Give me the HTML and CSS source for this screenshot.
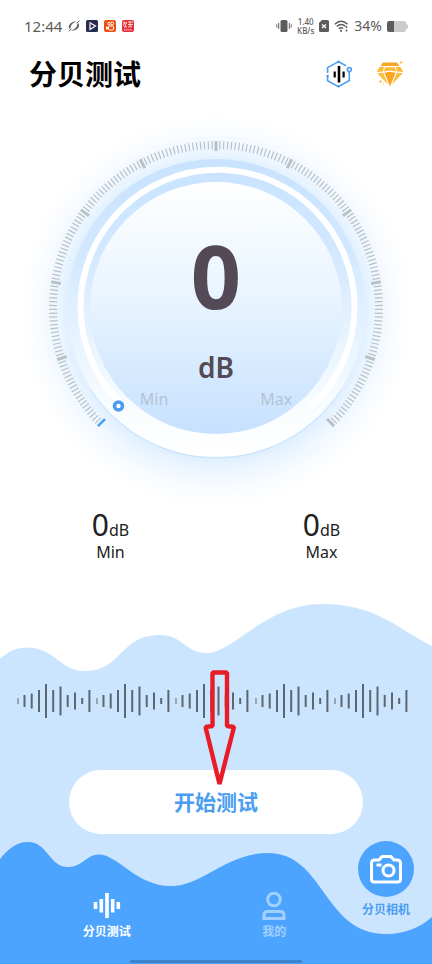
FILE: index.html
```html
<!DOCTYPE html>
<html lang="zh-CN">
<head>
<meta charset="utf-8">
<meta name="viewport" content="width=device-width, initial-scale=1">
<title>分贝测试</title>
<link rel="stylesheet" href="styles.css">
</head>
<body>
<div class="app">
  <div class="status">
    <div class="status-group">
      <span class="clock">12:44</span>
      <svg class="mini" viewBox="0 0 12 12" aria-hidden="true">
        <path d="M1.200 8.600C-.2 4.500 4 .6 9 1.600C5.600 2 2.800 4.600 2.400 8.400Z" fill="#5c5c5c"/>
        <path d="M10.800 3.400C12.200 7.500 8 11.400 3 10.400C6.400 10 9.200 7.400 9.600 3.600Z" fill="#5c5c5c"/>
        <path d="M.6 11.200L3.400 8.800M8.600 3.200L11.400 .8" stroke="#5c5c5c"/>
      </svg>
      <svg class="mini" viewBox="0 0 12 12" aria-hidden="true">
        <rect width="12" height="12" rx="1.500" fill="#262b52"/>
        <path d="M4 2.800V9.500L9.500 6Z" fill="none" stroke="#fff" stroke-width="1.200"/>
        <path d="M3 3L6 5" stroke="#e26a9a"/>
      </svg>
      <svg class="mini" viewBox="0 0 12 12" aria-hidden="true">
        <rect width="12" height="12" rx="2" fill="#f0500f"/>
        <g fill="none" stroke="#fff"><circle cx="5" cy="3.600" r="1.300"/><circle cx="8.200" cy="3.400" r="1.500"/><rect x="4.500" y="6" width="5" height="4" rx="1"/><path d="M4.500 8L2.500 6.800V9.300Z"/></g>
      </svg>
      <svg class="mini" viewBox="0 0 12 12" aria-hidden="true">
        <rect width="12" height="12" rx="2" fill="#e2303c"/>
        <path d="M1 3H5M2.500 1.500L1.500 6M4.500 2L3 7M6 2H11M8 1V6M6 4.500H11M6 7L10 6.500M2 7H5" stroke="#ffe3c8" stroke-width=".9"/>
        <path d="M2 9.800H10" stroke="#ffb6b6" stroke-width="1.200" stroke-dasharray="1.500 .6"/>
      </svg>
    </div>
    <div class="status-group status-right">
      <svg class="vibrate" viewBox="0 0 16 14" aria-hidden="true">
        <rect x="4.500" y="1" width="7" height="12" rx="1.500" fill="#5c5c5c"/>
        <path d="M2.700 4V10M13.300 4V10M.8 5.500V8.500M15.200 5.500V8.500" stroke="#5c5c5c"/>
      </svg>
      <span class="speed"><span>1.40</span><span>KB/s</span></span>
      <svg class="sim" viewBox="0 0 10 12" aria-hidden="true">
        <path d="M3 0H8.500Q10 0 10 1.500V10.500Q10 12 8.500 12H1.500Q0 12 0 10.500V3Z" fill="#5c5c5c"/>
        <path d="M3 4.500L7 8M7 4.500L3 8" stroke="#fff" stroke-width="1.200"/>
      </svg>
      <svg class="wifi" viewBox="0 0 15 12" aria-hidden="true">
        <path d="M.8 4.200Q7 -1.800 13.600 4.200M2.800 6.500Q7 2.600 11.300 6.200M4.800 8.700Q7 6.800 9.200 8.500" fill="none" stroke="#5c5c5c" stroke-width="1.500"/>
        <circle cx="7" cy="10.800" r="1.100" fill="#5c5c5c"/>
        <path d="M12.500 6V8M12.500 9.500V11.500" stroke="#5c5c5c" stroke-width="1.500"/>
      </svg>
      <span class="percent">34%</span>
      <svg class="battery" viewBox="0 0 21 11" aria-hidden="true">
        <path d="M2.500 0H17Q19 0 19.300 3L21 4V7L19.300 8Q19 11 17 11H2.500Q0 11 0 8.500V2.500Q0 0 2.500 0Z" fill="#cbcbcb"/>
        <path d="M2.500 0H7V11H2.500Q0 11 0 8.500V2.500Q0 0 2.500 0Z" fill="#5c5c5c"/>
      </svg>
    </div>
  </div>

  <header class="header">
    <h1>分贝测试</h1>
    <div class="actions">
      <button type="button" aria-label="声波">
        <svg viewBox="0 0 28 28" aria-hidden="true">
          <g fill="none" stroke="#4a9df2" stroke-width="1.600">
            <path d="M2.600 13V7.600L13.500 1.600L21 5.800"/>
            <path d="M2.600 16.500V20.800L13.500 26.600L24.300 20.500V12"/>
            <circle cx="24.300" cy="9.600" r="2"/>
          </g>
          <circle cx="2.600" cy="16" r="1.300" fill="#4a9df2"/>
          <circle cx="13.500" cy="1.800" r="1.300" fill="#4a9df2"/>
          <circle cx="13.500" cy="26.300" r="1.300" fill="#4a9df2"/>
          <path d="M14 6V22.500" stroke="#000" stroke-width="2.600"/>
          <path d="M9.700 11.500V17.500M18.600 11.500V17.500" stroke="#000" stroke-width="2.200"/>
        </svg>
      </button>
      <button type="button" aria-label="会员">
        <svg viewBox="0 0 28 28" aria-hidden="true">
          <path d="M7 2.500H21L23.500 6H4.500Z" fill="#f6a623"/>
          <path d="M3.800 6.800L8 7L7 11.500L.8 12Z" fill="#fbb934"/>
          <path d="M24.200 6.800L20 7L21 11.500L27.200 12Z" fill="#fbb934"/>
          <path d="M9 7.200H19L20 11.500L14 10.500L8 11.500Z" fill="#fbb934"/>
          <path d="M1.200 13.200L7.200 12.800L12 24.500Z" fill="#fcbc3c"/>
          <path d="M26.800 13.200L20.800 12.800L16 24.500Z" fill="#fcbc3c"/>
          <path d="M8.400 12.700L14 11.700L19.600 12.700L14 26.500Z" fill="#f9a51e"/>
          <path d="M25 1V4M23.500 2.500H26.500M4.500 20V23M3 21.500H6M6.500 24H8" stroke="#fbc456"/>
        </svg>
      </button>
    </div>
  </header>

  <main class="main">
    <section class="dial" aria-label="分贝表">
      <svg class="dial-art" viewBox="0 0 432 400" aria-hidden="true">
        <defs>
          <radialGradient id="glow" gradientUnits="userSpaceOnUse" cx="216" cy="217" r="196">
            <stop offset=".74" stop-color="#ddeeff"/>
            <stop offset=".82" stop-color="#edf6ff"/>
            <stop offset=".9" stop-color="#f8fbff"/>
            <stop offset="1" stop-color="#fff"/>
          </radialGradient>
          <linearGradient id="rim" x1="0" y1="0" x2="0" y2="1">
            <stop offset="0" stop-color="#c8e3ff"/>
            <stop offset=".3" stop-color="#d2e8ff"/>
            <stop offset=".55" stop-color="#e3f2ff"/>
            <stop offset=".85" stop-color="#fafdff"/>
            <stop offset="1" stop-color="#fff"/>
          </linearGradient>
          <linearGradient id="face" x1="0" y1="0" x2="0" y2="1">
            <stop offset="0" stop-color="#fff"/>
            <stop offset=".5" stop-color="#e6f3ff"/>
            <stop offset="1" stop-color="#c6e1ff"/>
          </linearGradient>
          <path id="mark" d="M216 47V57"/>
        </defs>
        <circle cx="216" cy="217" r="196" fill="url(#glow)"/>
        <circle cx="216" cy="214" r="149" fill="url(#rim)"/>
        <path d="M91 296A149 149 0 0 0 341 296" fill="none" stroke="#c9e3fb"/>
        <path d="M120.500 309.500A137 137 0 1 1 313 311" fill="none" stroke="#fff" stroke-width="6" stroke-linecap="round"/>
        <circle cx="216" cy="214" r="126" fill="url(#face)"/>
        <path d="M100.700 329.300A163 163 0 1 1 331.300 329.300" fill="none" stroke="#b9c1c8" stroke-width="8" pathLength="2000" stroke-dasharray="3.200 6.800" stroke-dashoffset="1.600"/>
        <g stroke="#b9c1c6" stroke-width="3">
          <use href="#mark" transform="rotate(-108 216 214)"/><use href="#mark" transform="rotate(-81 216 214)"/>
          <use href="#mark" transform="rotate(-54 216 214)"/><use href="#mark" transform="rotate(-27 216 214)"/>
          <use href="#mark"/><use href="#mark" transform="rotate(27 216 214)"/>
          <use href="#mark" transform="rotate(54 216 214)"/><use href="#mark" transform="rotate(81 216 214)"/>
          <use href="#mark" transform="rotate(108 216 214)"/><use href="#mark" transform="rotate(135 216 214)"/>
        </g>
        <use href="#mark" transform="rotate(-135 216 214)" stroke="#4a9df0" stroke-width="2.500"/>
        <circle cx="118.500" cy="312" r="4" fill="#fff" stroke="#4a9df0" stroke-width="3.600"/>
      </svg>
      <div class="reading">
        <span class="value">0</span>
        <span class="unit">dB</span>
        <div class="range"><span>Min</span><span>Max</span></div>
      </div>
    </section>

    <section class="stats">
      <div class="stat"><div class="amount">0<small>dB</small></div><div class="name">Min</div></div>
      <div class="stat"><div class="amount">0<small>dB</small></div><div class="name">Max</div></div>
    </section>

    <section class="bottom">
      <svg class="waves" viewBox="0 0 432 364" preserveAspectRatio="none" aria-hidden="true">
        <path d="M0 59C9 51 17 47.500 27 47.500C55 47.500 60 71 84 71C123 71 119 35 160 35C183 35 185 53 207 53C233 53 266 4 322 4C375 4 395 27 432 46V364H0Z" fill="#cce5ff"/>
        <path d="M0 259C9 248 17 242 28 242C48 242 49 267 68 267C83 267 86 254.500 99 254.500C118 254.500 136 286 171 286C203 286 226 253 268 253C325 253 323 334 386 334C405 334 421 327 432 317V364H0Z" fill="#4ca4ff"/>
      </svg>
      <svg class="sound" viewBox="0 0 391 40" aria-hidden="true">
        <defs>
          <g id="bars" stroke="#5c666e" stroke-width="2">
            <path d="M1 17V23" stroke-width="1"/>
            <path d="M7.500 14V26M14.700 12.500V27.500M22 9V31M29 3V37M36.200 9V31M43.500 5.500V34.500M50.700 14V26M58 11.500V28.500M65.200 17V23M72.400 9V31"/>
          </g>
        </defs>
        <use href="#bars"/><use href="#bars" x="79"/><use href="#bars" x="158"/><use href="#bars" x="238"/><use href="#bars" x="317"/>
      </svg>
      <button class="start" type="button">开始测试</button>
      <svg class="arrow" viewBox="0 0 34 120" aria-hidden="true">
        <path d="M9.500 4.500H24V58L31 59L16.500 116L2.500 59L9.500 58Z" fill="none" stroke="#e81c26" stroke-width="4.400" stroke-linejoin="bevel"/>
      </svg>
      <nav class="nav">
        <a class="tab" href="#test" aria-current="page">
          <svg viewBox="0 0 28 28" aria-hidden="true"><path d="M14 1V26M8.300 7V20.500M19.700 7V20.500M2.500 10V17M25.300 10V17" stroke="#fff" stroke-width="3.600"/></svg>
          <span>分贝测试</span>
        </a>
        <a class="tab muted" href="#mine">
          <svg viewBox="0 0 28 28" aria-hidden="true"><g fill="none" stroke="#a3d0ff" stroke-width="3"><circle cx="14" cy="7.500" r="6.300"/><path d="M4 26.500V23Q4 19.500 8 19.500H20Q24 19.500 24 23V26.500Z"/></g></svg>
          <span>我的</span>
        </a>
        <a class="camera" href="#camera">
          <span class="disc">
            <svg viewBox="0 0 32 30" aria-hidden="true"><g fill="none" stroke="#fff" stroke-width="3" stroke-linejoin="round"><path d="M5 6H9L12 2.500H21L24 6H27Q30.500 6 30.500 9V25Q30.500 28 27.500 28H4.500Q1.500 28 1.500 25V9Q1.500 6 5 6Z"/><circle cx="18.500" cy="16.500" r="5.500"/><path d="M6.500 11H11.500"/></g></svg>
          </span>
          <span>分贝相机</span>
        </a>
      </nav>
      <div class="home-bar"></div>
    </section>
  </main>
</div>
</body>
</html>
```
FILE: styles.css
```css
* {
  box-sizing: border-box;
}

body {
  margin: 0;
  background: #fff;
  color: #222;
  font-family: "Noto Sans", "Noto Sans CJK SC", sans-serif;
}

button {
  border: 0;
  padding: 0;
  background: none;
  font: inherit;
  cursor: pointer;
}

a {
  color: inherit;
  text-decoration: none;
}

svg {
  display: block;
}

.app {
  display: flex;
  flex-direction: column;
  min-height: 100vh;
}

.status {
  display: flex;
  justify-content: space-between;
  padding: 16px 24px 0;
  color: #5c5c5c;
}

.status-group {
  display: flex;
  align-items: center;
  gap: 6px;
  height: 20px;
}

.status-right {
  gap: 5px;
}

.clock {
  font-size: 15px;
  line-height: 20px;
}

.percent {
  font-size: 14px;
  line-height: 20px;
}

.mini {
  width: 12px;
  height: 12px;
}

.vibrate {
  width: 16px;
  height: 14px;
}

.speed {
  display: flex;
  flex-direction: column;
  align-items: center;
  font-size: 8px;
  font-weight: 500;
  line-height: 9px;
}

.sim {
  width: 10px;
  height: 12px;
}

.wifi {
  width: 15px;
  height: 12px;
}

.battery {
  width: 21px;
  height: 11px;
}

.header {
  display: flex;
  align-items: center;
  justify-content: space-between;
  height: 40px;
  margin-top: 18px;
  padding: 0 28px 0 29px;
}

.header h1 {
  margin: 0;
  color: #000;
  font-size: 28px;
  font-weight: 700;
  line-height: 40px;
}

.actions {
  display: flex;
  gap: 23px;
}

.actions svg {
  width: 28px;
  height: 28px;
}

.main {
  display: flex;
  flex: 1;
  flex-direction: column;
}

.dial {
  display: grid;
  width: 100%;
  max-width: 480px;
  margin: 0 auto;
}

.dial-art {
  grid-area: 1 / 1;
  width: 100%;
  overflow: visible;
}

.reading {
  position: relative;
  grid-area: 1 / 1;
  display: flex;
  flex-direction: column;
  align-items: center;
  align-self: center;
  padding-top: 48px;
  color: #544a55;
}

.value {
  font-size: 88px;
  font-weight: 700;
  line-height: 100px;
}

.unit {
  margin-top: 22px;
  font-size: 28px;
  font-weight: 600;
  line-height: 40px;
}

.range {
  display: flex;
  gap: 92px;
  color: #b4c3d6;
  font-size: 16px;
  line-height: 24px;
}

.stats {
  display: grid;
  grid-template-columns: 1fr 1fr;
  margin-top: 14px;
  padding: 0 5px;
  text-align: center;
}

.amount {
  font-size: 30px;
  font-weight: 400;
  line-height: 34px;
}

.amount small {
  font-size: 16px;
  line-height: 16px;
}

.name {
  font-size: 16px;
  line-height: 20px;
}

.bottom {
  position: relative;
  display: flex;
  flex: 1;
  flex-direction: column;
  min-height: 364px;
  margin-top: 38px;
  padding-top: 81px;
}

.waves {
  position: absolute;
  inset: 0;
  width: 100%;
  height: 100%;
}

.sound {
  position: relative;
  margin: 0 24px 0 17px;
}

.start {
  position: relative;
  height: 64px;
  margin: 49px 69px 0;
  border-radius: 32px;
  background: #fff;
  color: #4a9df0;
  font-size: 21px;
  font-weight: 700;
  line-height: 28px;
}

.arrow {
  position: absolute;
  top: 68px;
  left: 50%;
  width: 34px;
  height: 120px;
  margin-left: -13px;
  pointer-events: none;
}

.nav {
  position: relative;
  display: grid;
  grid-template-columns: 1fr 1fr 56px;
  align-items: end;
  margin-top: auto;
  padding: 0 18px 0 23px;
  font-size: 12px;
  font-weight: 700;
  line-height: 20px;
}

.tab {
  display: flex;
  flex-direction: column;
  align-items: center;
  gap: 2px;
  color: #fff;
}

.tab svg {
  width: 28px;
  height: 28px;
}

.muted {
  color: #a3d0ff;
}

.camera {
  display: flex;
  flex-direction: column;
  align-items: center;
  gap: 3px;
  margin-bottom: 22px;
  color: #4a9df0;
}

.disc {
  display: grid;
  place-items: center;
  width: 56px;
  height: 56px;
  border-radius: 50%;
  background: #4ca4ff;
}

.disc svg {
  width: 32px;
  height: 30px;
}

.home-bar {
  position: relative;
  width: 40%;
  height: 3px;
  margin: 18px auto 1px;
  border-radius: 2px;
  background: #3c82cc;
}
```
